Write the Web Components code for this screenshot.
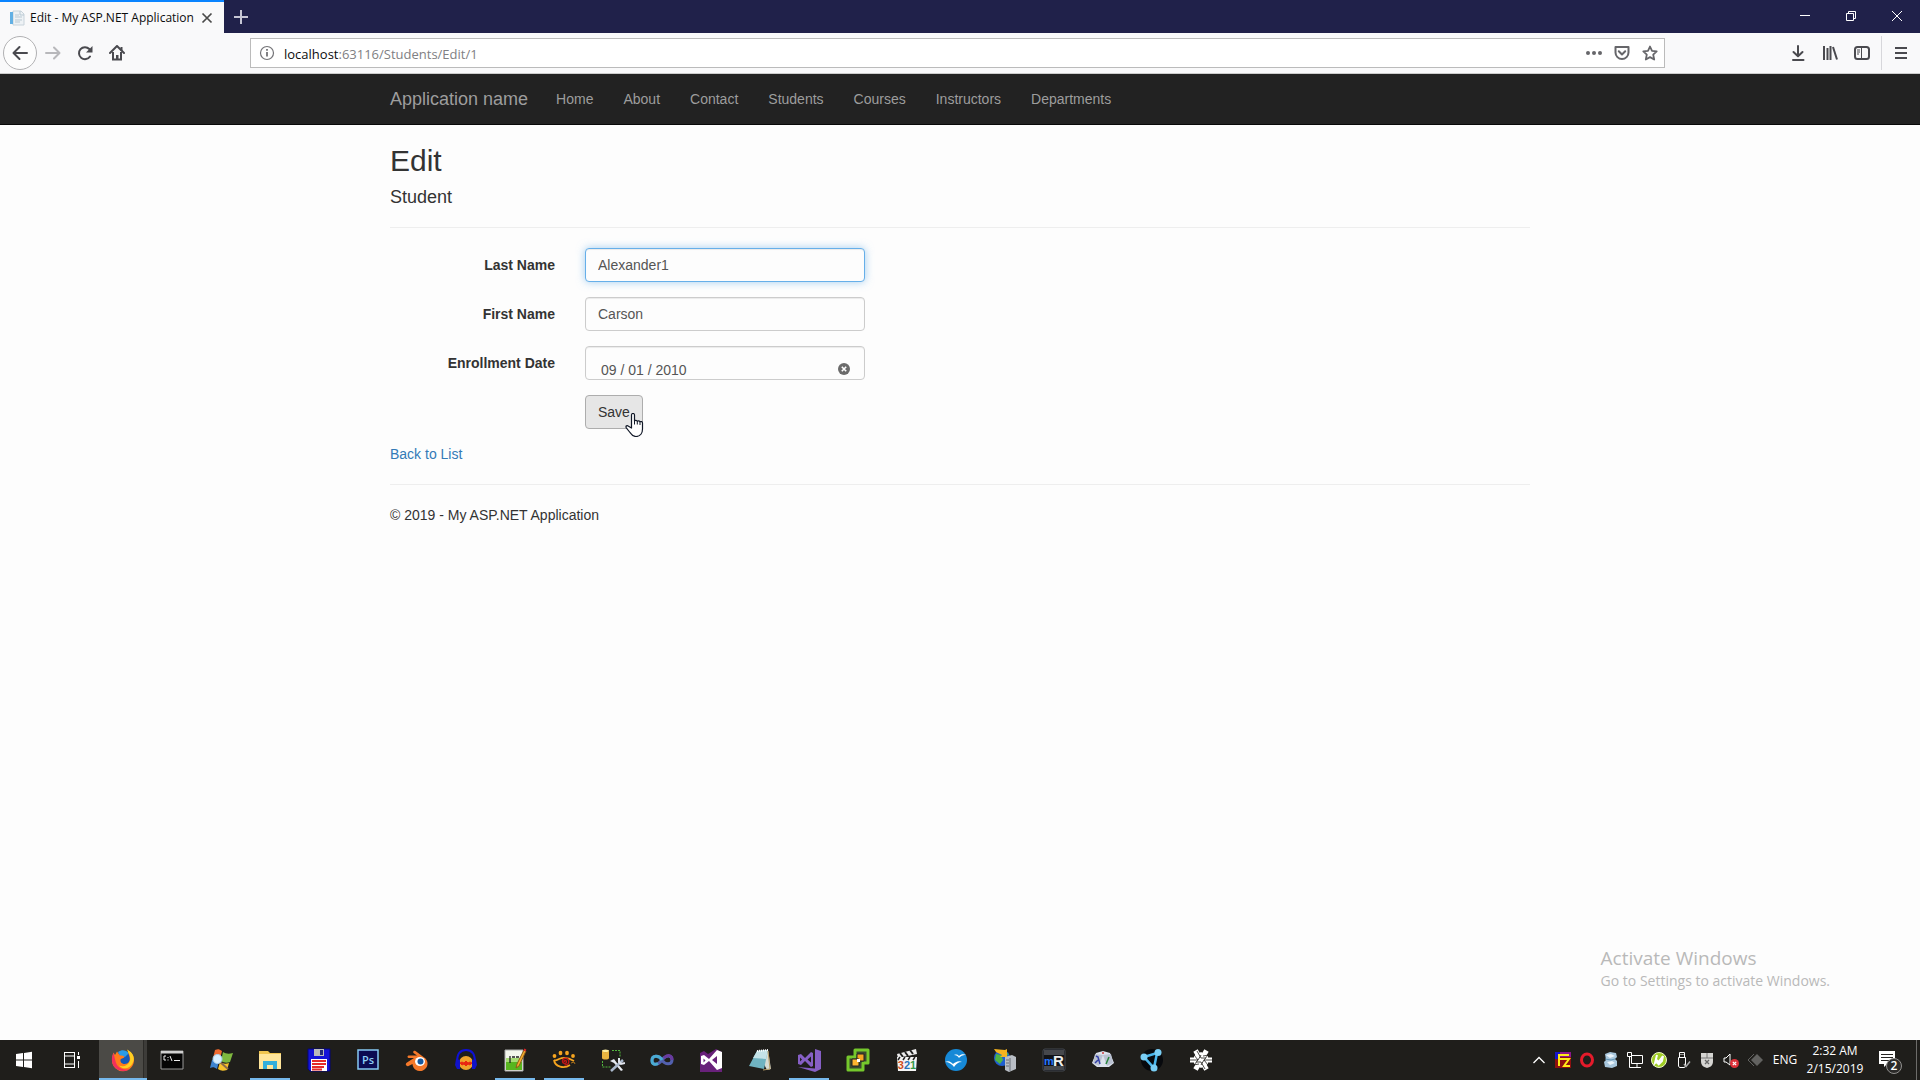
<!DOCTYPE html>
<html lang="en">
<head>
<meta charset="utf-8">
<title>Edit - My ASP.NET Application</title>
<style>
  html, body {
    height: 100%;
  }

  body {
    margin: 0;
    display: flex;
    flex-direction: column;
    position: relative;
    overflow: hidden;
    background: #fdfdfd;
    color: #333;
    font-family: "Liberation Sans", Arial, sans-serif;
    font-size: 14px;
    line-height: 20px;
    --ui-font: "Open Sans", "Noto Sans", sans-serif;
  }

  main-page {
    flex: 1;
  }
</style>
</head>
<body>
  <title-bar>Edit - My ASP.NET Application</title-bar>
  <tool-bar host="localhost" path=":63116/Students/Edit/1"></tool-bar>
  <nav-bar>
    <span slot="brand">Application name</span>
    <nav-link>Home</nav-link>
    <nav-link>About</nav-link>
    <nav-link>Contact</nav-link>
    <nav-link>Students</nav-link>
    <nav-link>Courses</nav-link>
    <nav-link>Instructors</nav-link>
    <nav-link>Departments</nav-link>
  </nav-bar>
  <main-page>
    <edit-form heading="Edit" entity="Student">
      <form-field label="Last Name" value="Alexander1" active></form-field>
      <form-field label="First Name" value="Carson"></form-field>
      <form-field label="Enrollment Date" value="09 / 01 / 2010" clearable></form-field>
      <save-button>Save</save-button>
    </edit-form>
    <span slot="footer">© 2019 - My ASP.NET Application</span>
  </main-page>
  <activate-notice></activate-notice>
  <task-bar></task-bar>

<script>
// icon drawings, [viewBox size, markup]
const icons = {
  favicon: [16, `<path d="M4 1h8l3 3v11H4z" fill="#eef2f5" stroke="#c8d3da"/><path d="M1 2h3v12H1z" fill="#62b0e4"/><path d="M6 5h4M6 7h7M6 10h7M6 12h5" stroke="#b9c9d3"/><path d="M11 1v4h4" fill="none" stroke="#b9c9d3"/>`],
  tabclose: [16, `<path d="M3.500 3.500l9 9M12.500 3.500l-9 9" stroke="#4a4a4a" stroke-width="1.700"/>`],
  plus: [16, `<path d="M8 1v14M1 8h14" stroke="#c6c6d4" stroke-width="2"/>`],
  minimise: [16, `<path d="M3 7.500h10" stroke="#fff"/>`],
  restore: [16, `<path d="M3.500 5.500h7v7h-7zM5.500 5V3.500h7v7H11" fill="none" stroke="#fff"/>`],
  close: [16, `<path d="M3 3l10 10M13 3L3 13" stroke="#fff"/>`],
  back: [16, `<path d="M15 8H2M7.500 2L1.500 8l6 6" fill="none" stroke="#4a4a4f" stroke-width="2" stroke-linecap="round" stroke-linejoin="round"/>`],
  forward: [16, `<path d="M1 8h13M9 2.500L14.500 8 9 13.500" fill="none" stroke="#b8b8bb" stroke-width="2" stroke-linecap="round" stroke-linejoin="round"/>`],
  reload: [16, `<path d="M13 11.500A6 6 0 1 1 12.300 4" fill="none" stroke="#4a4a4f" stroke-width="2" stroke-linecap="round"/><path d="M15.500 1v6.500H9z" fill="#4a4a4f"/>`],
  home: [16, `<path d="M1 8l7-7 7 7" fill="none" stroke="#4a4a4f" stroke-width="2" stroke-linecap="round" stroke-linejoin="round"/><path d="M11.500 2h2v4h-2z" fill="#4a4a4f"/><path d="M4 7v7.500h8V7" fill="none" stroke="#4a4a4f" stroke-width="2"/><path d="M7 10h2.500v5H7z" fill="#4a4a4f"/>`],
  info: [16, `<circle cx="8" cy="8" r="6.500" fill="none" stroke="#737377" stroke-width="1.200"/><path d="M8 7v4.500M8 4v1.800" stroke="#737377" stroke-width="1.800"/>`],
  dots: [16, `<g fill="#66666a"><circle cx="2" cy="8" r="2"/><circle cx="8" cy="8" r="2"/><circle cx="14" cy="8" r="2"/></g>`],
  pocket: [16, `<path d="M1.500 2h13v5.500a6.500 6.500 0 0 1-13 0z" fill="none" stroke="#66666a" stroke-width="2" stroke-linejoin="round"/><path d="M4.800 6.300L8 9.500l3.200-3.200" fill="none" stroke="#66666a" stroke-width="2" stroke-linecap="round" stroke-linejoin="round"/>`],
  star: [16, `<path d="M8 1.500l2 4.400 4.700.5-3.500 3.200 1 4.900L8 12.100l-4.200 2.400 1-4.900L1.300 6.400 6 5.900z" fill="none" stroke="#66666a" stroke-width="1.800" stroke-linejoin="round"/>`],
  download: [16, `<path d="M8 1v10M3.500 7L8 11.300 12.500 7M3 15h10.500" fill="none" stroke="#4a4a4f" stroke-width="2" stroke-linecap="round" stroke-linejoin="round"/>`],
  library: [16, `<path d="M2 1v14M5.500 3v12M8.500 1v14M11 2l4 12.500" stroke="#4a4a4f" stroke-width="2"/>`],
  sidebar: [16, `<rect x="1" y="2" width="14" height="12" rx="2.500" fill="none" stroke="#4a4a4f" stroke-width="2"/><path d="M7.500 3v10M3 5h3M3 7h3M3 9h2" stroke="#4a4a4f"/>`],
  menu: [16, `<path d="M2 3h12M2 8h12M2 13h12" stroke="#4a4a4f" stroke-width="2"/>`],
  clear: [12, `<circle cx="6" cy="6" r="6" fill="#6b6b6b"/><path d="M3.800 3.800l4.400 4.400M8.200 3.800L3.800 8.200" stroke="#fff" stroke-width="1.600"/>`],
  hand: [24, `<path d="M8.500 15V2a1.500 1.500 0 0 1 3 0v6c.3-.9 2.500-.9 2.800.3.700-.8 2.400-.6 2.700.5.900-.6 2.500-.2 2.500 1.200v6c0 4-2 7.500-6.500 7.500-3.500 0-4.500-1.700-6-4L3.300 14.800c-1-1.800.8-2.800 2.200-1.600z" fill="#fff" stroke="#111827" stroke-width="1.200" stroke-linejoin="round"/><path d="M11.500 8v3.500M14.300 8.500v3M17 9v3" stroke="#111827"/>`],

  // task bar
  windows: [24, `<path d="M4 6l7-1v6.500H4zM12 4.900l8-1.100v7.700h-8zM4 12.500h7V19l-7-1zM12 12.500h8v7.700l-8-1.100z" fill="#fff"/>`],
  taskview: [24, `<path d="M4 4.500h11M4 19.500h11M4.500 4v4h10V4M4.500 20v-4h10v4M4.500 8v8M14.500 8v8M18.500 4v3M18.500 13v7" fill="none" stroke="#fff"/><path d="M17 8h3v3h-3z" fill="#fff"/>`],
  firefox: [24, `<circle cx="12" cy="12" r="9" fill="#1458b8"/><path d="M7 4c4-3 8-2 11 1l-4 4-5-1z" fill="#2a9be8"/><path d="M2.500 4.500L4 7l2-3.500 3 4c2 0 4 0 4.500 1.500-.5 1.500-3 1-4 2.500-.5 3 2 4.500 4 4.500 4 0 6-3 5-7-.5-2-1.500-4-1.500-6.500 4 2 6 5.500 6 9.500a11 11 0 0 1-22 .500c0-3 .5-5.500 1.500-8z" fill="#ff7b1c"/><path d="M16 1.500c1 3 4 6 3 11-1.500 5-7 7-11 5 4 4.500 11 3.500 13.500-2C25 9 21 4 16 1.500z" fill="#ffcf22"/><path d="M2.500 5C.5 9 0 14 3 18.500c4 5 11 6 16 2.500-5 1.500-10 0-13-4C4 13.500 4 10 2.500 5z" fill="#f3305c"/>`],
  cmd: [24, `<path d="M1 3h22v18H1z" fill="#050505" stroke="#999"/><path d="M1 3h22v2.500H1z" fill="#d0d0d0"/><path d="M6 8H4v4h2M8 9v1M8 11.500v1M10 8l2 5M14 12.500h6" fill="none" stroke="#eee"/>`],
  search: [24, `<path d="M6 2c3-1 4-1 7 1l-2 8c-3-2-4-2-7-1z" fill="#ef6a30"/><path d="M14 4c3 2 6 2 10 1l-3 9c-3 1-6 1-9-1z" fill="#7fb93f"/><path d="M3 12c3-1 5-1 7 1l-2 8c-3-2-4-2-7-1z" fill="#3d84cf"/><path d="M11 14c3 2 6 2 9 1l-2 7c-4 1-6 1-9-1z" fill="#f8c32c"/><path d="M11 14l8 7" stroke="#8b6b4c" stroke-width="2"/><circle cx="8.500" cy="11" r="4.500" fill="#d8efff" stroke="#a9d3ee"/>`],
  explorer: [24, `<path d="M1 3h9l2 2h11v16H1z" fill="#f0c54f"/><path d="M1 6h22v15H1z" fill="#ffe59a"/><path d="M5 13h14v8h-4v-4H9v4H5z" fill="#32aedb"/>`],
  floppy: [24, `<path d="M1 1h22v22H3l-2-2z" fill="#1414d8" stroke="#05057a"/><path d="M7 1h10v7H7z" fill="#bbb"/><path d="M13 2h3v5h-3z" fill="#222a7a"/><path d="M4 11h16v12H4z" fill="#fff"/><path d="M5 13h14M5 16h14M5 19h12M5 21.500h10" stroke="#e42a2a" stroke-width="1.800"/>`],
  photoshop: [24, `<path d="M2 2h20v19H2z" fill="#0b0b52" stroke="#86c9f4" stroke-width="1.500"/><text x="12" y="16" text-anchor="middle" font-family="Open Sans, sans-serif" font-size="11" font-weight="600" fill="#8ed0f8">Ps</text>`],
  blender: [24, `<path d="M1 17c-.5-1 0-2 1-2.500L9 10H4c-2 0-2-2.500 0-2.500h8L8.500 5c-1-1.500.5-3 2-2l10 7.500a7.500 7.500 0 1 1-13 5.500l-4 2c-1 .5-2 0-2.500-1z" fill="#f5792a"/><ellipse cx="15" cy="13.500" rx="5" ry="4.500" fill="#fff"/><circle cx="15.500" cy="13.500" r="3" fill="#16589e"/>`],
  audacity: [24, `<circle cx="12" cy="15" r="7" fill="#efa42c"/><path d="M6 15l2-1 2 1 2-2 2 2 2-1 2 1-2 2-2-1-2 2-2-2-2 1z" fill="#e92712" stroke="#e92712"/><path d="M3 14C3 5 7 2 12 2s9 3 9 12" fill="none" stroke="#0e10d6" stroke-width="2"/><path d="M2 11l4 1v9H3l-2-4zM22 11l-4 1v9h3l2-4z" fill="#1113c8"/>`],
  notepadpp: [24, `<path d="M2 2h18v21H2z" fill="#f3f6ed" stroke="#aaa"/><path d="M3 13h16v9H3z" fill="#58b51f"/><path d="M3 10h16v4H3z" fill="#a7dc75"/><path d="M7 8v7M9 9h3M13 9h3" stroke="#222" stroke-width="1.300"/><path d="M21 2l2 1-7 15-3 2 1-4z" fill="#f5ac2b" stroke="#8a5c1b"/><path d="M20.500 2.500l2 1 .8-2-2-1z" fill="#d92525"/>`],
  paw: [24, `<path d="M2 12c2 1 3 0 5-1 5-2 10-1 15 2M2 12c1 7 10 9 16 5" fill="none" stroke="#f5a41f" stroke-width="1.800"/><g fill="#f5a41f"><circle cx="2.500" cy="8" r="1.900"/><ellipse cx="8.500" cy="5" rx="1.900" ry="2.300"/><ellipse cx="15" cy="5" rx="1.900" ry="2.300"/><circle cx="21" cy="8" r="1.900"/></g><path d="M12.500 14c-1-2 2-2 2 0s-4 2-4-1 5-4 6-1 0 5-4 5" fill="none" stroke="#c01515" stroke-width="1.400"/><path d="M19 15l3-1 1 2" fill="none" stroke="#a8701a"/>`],
  sqltools: [24, `<ellipse cx="4.500" cy="3" rx="3.500" ry="1.500" fill="#fff0a0"/><path d="M1 3v7c0 2 7 2 7 0V3c-1 1.500-6 1.500-7 0z" fill="#e8b440"/><path d="M11 2.500h8v7M1.500 13v6h8" fill="none" stroke="#52b53e" stroke-dasharray="2 1"/><path d="M9 13l4-2 3 4 6 7-2 1-7-8z" fill="#e5e9f0"/><path d="M22 12l-12 11" stroke="#aab8cc" stroke-width="2.500"/><path d="M18 10v4l2 2 4-1" fill="none" stroke="#e1e5ee" stroke-width="2"/>`],
  infinity: [24, `<path d="M12 12C9 7 2 7 2 12.500c0 5 6 5 10-.5s10-5 10 0-7 5-10 0" fill="none" stroke="#5260ae" stroke-width="3"/><path d="M12 12C9 7 2 7 2 12.500c0 4 3 4.500 6 3" fill="none" stroke="#4aabd2" stroke-width="3"/><path d="M14 10c4-4 8-3 8 2" fill="none" stroke="#693a9e" stroke-width="3"/>`],
  vs2012: [24, `<path d="M1 5l4-2 4 3 8-5 6 3v20H1z" fill="#68217a"/><path d="M2 8l3-1 5 4 8-9 5 2v16l-5 2-8-9-5 4-3-1zM4.500 10.500v4l2-2zM18 8l-5 4 5 4z" fill="#fff" fill-rule="evenodd"/>`],
  notepad: [24, `<path d="M9 3l11-1 3 19-4 1z" fill="#d7dcd5"/><path d="M9 3l11-1-4 19-15-3z" fill="#6fb3c1"/><path d="M9 3l11-1-2 9-13-1z" fill="#c4e3e8"/><path d="M9 3l11-1" stroke="#fff" stroke-width="2" stroke-dasharray="1 1"/><path d="M20 3l2 18-7 1" fill="none" stroke="#b69c66"/>`],
  vs2017: [24, `<path d="M18 1l6 2v18l-6 3L1 19l17 1.500z" fill="#865fc5"/><path d="M1 7l3-1 4 4 6-6 2 1v13l-2 1-6-6-4 4-3-1zM3 9.500v4l2-2zM14 8.500l-3.500 3L14 14.500z" fill="#865fc5" fill-rule="evenodd"/>`],
  vmware: [24, `<path d="M9 2h13v13h-5v7H2V9h7z" fill="#3b482f" stroke="#75c82c" stroke-width="3" stroke-linejoin="round"/><path d="M11 6h7v7h-7z" fill="#f6a622" stroke="#222"/><path d="M6 11h7v7H6z" fill="#ffb52f" stroke="#222"/><path d="M11 11h3v3h-3z" fill="#fff"/>`],
  player: [24, `<path d="M2 6l19-5 1 5-19 4z" fill="#eee"/><path d="M5 5l3 4M10 4l3 4M15 2l3 4" stroke="#222" stroke-width="2"/><path d="M2 9h20l-1 14H3z" fill="#f5f5f5"/><path d="M5 9l-2 3M10 9l-2 3M15 9l-2 3M20 9l-2 3" stroke="#222" stroke-width="1.500"/><text x="12" y="21" text-anchor="middle" font-family="Liberation Sans, sans-serif" font-size="11" font-weight="700"><tspan fill="#cf4b20">3</tspan><tspan fill="#2773bc">2</tspan><tspan fill="#35994a">1</tspan></text>`],
  openoffice: [24, `<circle cx="12" cy="12" r="11" fill="#1689d7"/><path d="M1 14c4-2 6 0 8 2 2-2 6-4 9-2-4 0-6 2-8 5-2-3-5-5-9-5zM10 7c3-1 4 0 5 1 2-2 5-2 7-1-4 0-5 1-7 3-1-2-3-3-5-3z" fill="#fff"/>`],
  iis: [24, `<circle cx="9" cy="10" r="8" fill="#1f5fd0"/><path d="M3 6l5 1 2 5-3 4-5-4zM11 3l5 3-4 3z" fill="#4fb545"/><path d="M1 1l11 1 2-1v8l-7 0 2-2-6-3z" fill="#f6b41e"/><path d="M12 9l7-2 4 2v12l-7 3-4-2z" fill="#b9bec5"/><path d="M17 10v13M13 12h3M13 15h3M13 18h3" stroke="#686e78"/>`],
  mr: [24, `<rect x="1" y="1" width="22" height="22" rx="2" fill="#111317" stroke="#454950"/><path d="M2 2h20v5H2zM2 18h20v4H2z" fill="#46484c"/><text x="2" y="17" font-family="Liberation Sans, sans-serif" font-size="11" font-weight="700" fill="#2476ff">m</text><text x="11" y="18" font-family="Liberation Sans, sans-serif" font-size="15" font-weight="700" fill="#eee">R</text>`],
  dice: [24, `<path d="M5 5l7-2 7 2 4 10-5 4H6l-5-4z" fill="#dce2ed"/><path d="M4 6l8 1-4 11-6-3zM12 7l8-1 2 9-6 3z" fill="#b9c1d1"/><path d="M5 8l2 1 2 7M7 12l-3 3" fill="none" stroke="#3340a7" stroke-width="1.500"/><path d="M18 9l-3 7" stroke="#26843b" stroke-width="1.500"/><circle cx="12" cy="5" r="1" fill="#ce3d3d"/>`],
  nodes: [24, `<circle cx="12" cy="12" r="11" fill="#07090d"/><path d="M4 9l13-4-3 15z" fill="none" stroke="#4ab7ed" stroke-width="2.500"/><g fill="#79cef5"><circle cx="4" cy="9" r="3.500"/><circle cx="18" cy="4.500" r="3.500"/><circle cx="14" cy="20" r="3.500"/></g>`],
  knot: [24, `<g fill="none" stroke="#fff" stroke-width="5"><path d="M1 12h22M6.500 2.500l11 19M17.500 2.500l-11 19"/></g><path d="M12 4l7 4v8l-7 4-7-4V8z" fill="#fff"/><path d="M1 12h8l3-5M8 3l4 7h5M20 7l-6 1M23 12h-8l-3 5M16 21l-4-7H7M4 17l6-1M5 7l4 5-4 5M19 7l-4 5 4 5" fill="none" stroke="#1f1e1b" stroke-width=".8"/>`],

  // system tray
  chevron: [16, `<path d="M2.500 11L8 5.500l5.500 5.500" fill="none" stroke="#fff" stroke-width="1.300"/>`],
  filezilla: [16, `<path d="M0 0h16v16H0z" fill="#8d1010"/><path d="M0 0h5v7H0z" fill="#1515c8"/><path d="M5 0h11v5H5z" fill="#8b178b"/><path d="M4 14V3h10M4 7h10l-5 7h6" fill="none" stroke="#ffeb17" stroke-width="2"/>`],
  opera: [16, `<ellipse cx="8" cy="8" rx="5.500" ry="6" fill="none" stroke="#e51b2b" stroke-width="3"/>`],
  database: [16, `<path d="M2 2l5-2 6 1 1 4-2 2 2 2v5l-5 2-7-1-1-5 2-2z" fill="#a8c7dd"/><path d="M3 3l5-1 4 2-5 2zM4 10l5-1 3 2-5 2z" fill="#e9f3fa"/><path d="M2 7l6 1 4-1" fill="none" stroke="#5f93b4"/>`],
  network: [16, `<path d="M4.500 3.500h11v8h-11zM10 12v3M6 15.500h8M.500.500h4v4h-4zM2.500 5v10.500H7" fill="none" stroke="#fff"/>`],
  green: [16, `<circle cx="8" cy="8" r="7.500" fill="#9fcd24" stroke="#eef8c5"/><path d="M6 3l-2 8 3-3M6 12l6-8-1 5-4 4" fill="none" stroke="#fff" stroke-width="2"/>`],
  usb: [16, `<path d="M3.500 5.500h7V14l-1 1.500h-5l-1-1.500zM4.500 5V.500h5V5M6 2v1M8 2v1" fill="none" stroke="#fff"/><path d="M9 12l2 2.500 4-5" fill="none" stroke="#aaa" stroke-width="1.500"/>`],
  mouse: [16, `<path d="M2 1h12v8c0 4-2 6-6 7-4-1-6-3-6-7z" fill="#d5d5d2"/><path d="M2 6h12M8 1v5" stroke="#777"/><path d="M6 8l4 4M10 8l-4 4" stroke="#666" stroke-width="1.300"/>`],
  volume: [16, `<path d="M1 6h2l4-4v11L3 10H1z" fill="none" stroke="#fff"/><circle cx="11.500" cy="11.500" r="4.500" fill="#dc3038"/><path d="M9.800 9.800l3.400 3.400M13.200 9.800l-3.400 3.400" stroke="#fff" stroke-width="1.200"/>`],
  diamond: [16, `<path d="M10 2l6 6-6 6-6-6z" fill="#626260"/><path d="M7 2L1 8l6 6" fill="none" stroke="#626260"/>`],
  message: [28, `<path d="M4 5h16v13h-8l-3 3v-3H4z" fill="#fff"/><path d="M6 8.500h12M6 11.500h12M6 14.500h8" stroke="#252422"/><circle cx="19" cy="20" r="7.500" fill="#2b2a29" stroke="#92918f"/><text x="19" y="24" text-anchor="middle" font-family="Open Sans, sans-serif" font-size="12" font-weight="600" fill="#fff">2</text>`]
};

class SvgIcon extends HTMLElement {
  constructor() {
    super();
    this.attachShadow({ mode: "open" });
  }
  connectedCallback() {
    const [size, shapes] = icons[this.getAttribute("name")];
    this.shadowRoot.innerHTML = `
      <style>
        :host { display: inline-flex; flex: none; }
        svg { display: block; }
      </style>
      <svg width="${size}" height="${size}" viewBox="0 0 ${size} ${size}" aria-hidden="true">${shapes}</svg>
    `;
  }
}
customElements.define("svg-icon", SvgIcon);

class TitleBar extends HTMLElement {
  constructor() {
    super();
    this.attachShadow({ mode: "open" });
    this.shadowRoot.innerHTML = `
      <style>
        :host {
          display: flex;
          height: 33px;
          background: #20214a;
          font: 12px/16px var(--ui-font);
          color: #0c0c0d;
        }
        button {
          display: flex;
          align-items: center;
          justify-content: center;
          padding: 0;
          border: 0;
          background: none;
        }
        .tab {
          display: flex;
          align-items: center;
          box-sizing: border-box;
          width: 224px;
          padding: 0 9px;
          border-top: 2px solid #0a84ff;
          background: #f9f9fa;
        }
        .name {
          flex: 1;
          padding-left: 5px;
          white-space: nowrap;
        }
        .new { width: 34px; }
        .window {
          display: flex;
          height: 31px;
          margin-left: auto;
        }
        .window button { width: 46px; }
      </style>
      <div class="tab">
        <svg-icon name="favicon"></svg-icon>
        <span class="name"><slot></slot></span>
        <button aria-label="Close tab"><svg-icon name="tabclose"></svg-icon></button>
      </div>
      <button class="new" aria-label="New tab"><svg-icon name="plus"></svg-icon></button>
      <div class="window">
        <button aria-label="Minimize"><svg-icon name="minimise"></svg-icon></button>
        <button aria-label="Restore"><svg-icon name="restore"></svg-icon></button>
        <button aria-label="Close"><svg-icon name="close"></svg-icon></button>
      </div>
    `;
  }
}
customElements.define("title-bar", TitleBar);

class ToolBar extends HTMLElement {
  constructor() {
    super();
    this.attachShadow({ mode: "open" });
  }
  connectedCallback() {
    this.shadowRoot.innerHTML = `
      <style>
        :host {
          display: flex;
          align-items: center;
          box-sizing: border-box;
          height: 41px;
          padding: 0 1px 0 3px;
          border-bottom: 1px solid #ccc;
          background: #f9f9fa;
          font: 13px/20px var(--ui-font);
        }
        button {
          display: flex;
          align-items: center;
          justify-content: center;
          width: 32px;
          height: 32px;
          padding: 0;
          border: 0;
          background: none;
        }
        .back {
          width: 34px;
          height: 34px;
          border: 1px solid #b1b1b3;
          border-radius: 50%;
          background: #fdfdfd;
        }
        .url {
          display: flex;
          align-items: center;
          flex: 1;
          box-sizing: border-box;
          height: 30px;
          margin: 0 117px;
          padding: 0 0 0 8px;
          border: 1px solid #bbb;
          background: #fff;
        }
        .address {
          flex: 1;
          padding: 2px 0 0 9px;
          color: #0c0c0d;
        }
        .address span { color: #808083; }
        .url button { width: 28px; }
        .menu {
          width: 38px;
          height: 34px;
          border-left: 1px solid #d7d7db;
          margin-left: 3px;
        }
      </style>
      <button class="back" aria-label="Back"><svg-icon name="back"></svg-icon></button>
      <button aria-label="Forward"><svg-icon name="forward"></svg-icon></button>
      <button aria-label="Reload"><svg-icon name="reload"></svg-icon></button>
      <button aria-label="Home"><svg-icon name="home"></svg-icon></button>
      <div class="url">
        <svg-icon name="info"></svg-icon>
        <div class="address">${this.getAttribute("host")}<span>${this.getAttribute("path")}</span></div>
        <button aria-label="Page actions"><svg-icon name="dots"></svg-icon></button>
        <button aria-label="Save to Pocket"><svg-icon name="pocket"></svg-icon></button>
        <button aria-label="Bookmark this page"><svg-icon name="star"></svg-icon></button>
      </div>
      <button aria-label="Downloads"><svg-icon name="download"></svg-icon></button>
      <button aria-label="Library"><svg-icon name="library"></svg-icon></button>
      <button aria-label="Sidebars"><svg-icon name="sidebar"></svg-icon></button>
      <button class="menu" aria-label="Menu"><svg-icon name="menu"></svg-icon></button>
    `;
  }
}
customElements.define("tool-bar", ToolBar);

class NavBar extends HTMLElement {
  constructor() {
    super();
    this.attachShadow({ mode: "open" });
    this.shadowRoot.innerHTML = `
      <style>
        :host {
          display: block;
          border-bottom: 1px solid #080808;
          background: #222;
        }
        nav {
          display: flex;
          align-items: center;
          box-sizing: border-box;
          max-width: 1170px;
          height: 50px;
          margin: 0 auto;
        }
        .brand {
          padding: 15px 13px 15px 15px;
          color: #9d9d9d;
          font-size: 18px;
          text-decoration: none;
        }
      </style>
      <nav>
        <a class="brand" href="#"><slot name="brand"></slot></a>
        <slot></slot>
      </nav>
    `;
  }
}
customElements.define("nav-bar", NavBar);

class NavLink extends HTMLElement {
  constructor() {
    super();
    this.attachShadow({ mode: "open" });
    this.shadowRoot.innerHTML = `
      <style>
        :host { display: block; }
        a {
          display: block;
          padding: 15px;
          color: #9d9d9d;
          text-decoration: none;
        }
      </style>
      <a href="#"><slot></slot></a>
    `;
  }
}
customElements.define("nav-link", NavLink);

class MainPage extends HTMLElement {
  constructor() {
    super();
    this.attachShadow({ mode: "open" });
    this.shadowRoot.innerHTML = `
      <style>
        :host { display: block; }
        .container {
          box-sizing: border-box;
          max-width: 1170px;
          margin: 0 auto;
          padding: 0 15px;
        }
        hr {
          margin: 20px 0;
          border: 0;
          border-top: 1px solid #eee;
        }
        a {
          color: #337ab7;
          text-decoration: none;
        }
        p { margin: 0 0 10px; }
      </style>
      <div class="container">
        <slot></slot>
        <div><a href="#">Back to List</a></div>
        <hr>
        <footer><p><slot name="footer"></slot></p></footer>
      </div>
    `;
  }
}
customElements.define("main-page", MainPage);

class EditForm extends HTMLElement {
  constructor() {
    super();
    this.attachShadow({ mode: "open" });
  }
  connectedCallback() {
    this.shadowRoot.innerHTML = `
      <style>
        :host { display: block; }
        h2, h4 {
          margin: 0 0 10px;
          font-weight: 400;
        }
        h2 {
          padding-top: 19px;
          font-size: 30px;
          line-height: 33px;
        }
        h4 {
          font-size: 18px;
          line-height: 20px;
        }
        hr {
          margin: 20px 0;
          border: 0;
          border-top: 1px solid #eee;
        }
        form {
          display: flex;
          flex-direction: column;
          gap: 15px;
          margin-bottom: 15px;
        }
      </style>
      <h2>${this.getAttribute("heading")}</h2>
      <h4>${this.getAttribute("entity")}</h4>
      <hr>
      <form><slot></slot></form>
    `;
  }
}
customElements.define("edit-form", EditForm);

class FormField extends HTMLElement {
  constructor() {
    super();
    this.attachShadow({ mode: "open" });
  }
  connectedCallback() {
    const clear = this.hasAttribute("clearable")
      ? `<button type="button" aria-label="Clear"><svg-icon name="clear"></svg-icon></button>`
      : "";
    this.shadowRoot.innerHTML = `
      <style>
        :host {
          display: flex;
          gap: 30px;
        }
        label {
          width: 165px;
          padding-top: 7px;
          font-weight: 700;
          text-align: right;
        }
        .control {
          display: flex;
          box-sizing: border-box;
          width: 280px;
          height: 34px;
          border: 1px solid #ccc;
          border-radius: 4px;
          background: #fdfdfd;
          box-shadow: inset 0 1px 1px rgba(0, 0, 0, 0.075);
        }
        :host([active]) .control {
          border-color: #66afe9;
          box-shadow: inset 0 1px 1px rgba(0, 0, 0, 0.075), 0 0 8px rgba(102, 175, 233, 0.6);
        }
        input {
          flex: 1;
          min-width: 0;
          padding: 0 12px;
          border: 0;
          outline: 0;
          background: none;
          color: #555;
          font: inherit;
        }
        :host([clearable]) input { padding: 14px 0 0 15px; }
        button {
          display: flex;
          padding: 16px 14px 0;
          border: 0;
          background: none;
        }
      </style>
      <label for="field">${this.getAttribute("label")}</label>
      <div class="control">
        <input id="field" type="text" value="${this.getAttribute("value")}">
        ${clear}
      </div>
    `;
  }
}
customElements.define("form-field", FormField);

class SaveButton extends HTMLElement {
  constructor() {
    super();
    this.attachShadow({ mode: "open" });
    this.shadowRoot.innerHTML = `
      <style>
        :host {
          display: flex;
          padding-left: 195px;
        }
        .wrap { position: relative; }
        button {
          height: 34px;
          padding: 0 12px;
          border: 1px solid #adadad;
          border-radius: 4px;
          background: #e6e6e6;
          color: #333;
          font: inherit;
        }
        /* mouse pointer over the button */
        .pointer {
          position: absolute;
          left: 38px;
          top: 18px;
        }
      </style>
      <div class="wrap">
        <button type="submit"><slot></slot></button>
        <svg-icon class="pointer" name="hand"></svg-icon>
      </div>
    `;
  }
}
customElements.define("save-button", SaveButton);

class ActivateNotice extends HTMLElement {
  constructor() {
    super();
    this.attachShadow({ mode: "open" });
    this.shadowRoot.innerHTML = `
      <style>
        :host {
          position: absolute;
          right: 90px;
          bottom: 89px;
          color: #b9b9b9;
          font: 14px/20px var(--ui-font);
        }
        .title {
          font-size: 19px;
          line-height: 26px;
        }
      </style>
      <div class="title">Activate Windows</div>
      <div>Go to Settings to activate Windows.</div>
    `;
  }
}
customElements.define("activate-notice", ActivateNotice);

class TaskButton extends HTMLElement {
  constructor() {
    super();
    this.attachShadow({ mode: "open" });
  }
  connectedCallback() {
    const icon = this.getAttribute("icon");
    this.shadowRoot.innerHTML = `
      <style>
        :host {
          display: flex;
          box-sizing: border-box;
          width: 49px;
          padding-left: 5px;
        }
        button {
          display: flex;
          align-items: center;
          justify-content: center;
          width: 40px;
          height: 40px;
          padding: 0;
          border: 0;
          background: none;
        }
        :host([running]) button {
          box-shadow: inset 0 -2px #76b9ed;
        }
        :host([current]) {
          padding-left: 1px;
        }
        :host([current]) button {
          width: 48px;
          background: linear-gradient(to right, #4b4a46 44px, #2c2b28 44px, #2c2b28 45px, #3d3c39 45px);
        }
      </style>
      <button aria-label="${icon}"><svg-icon name="${icon}"></svg-icon></button>
    `;
  }
}
customElements.define("task-button", TaskButton);

class TaskBar extends HTMLElement {
  constructor() {
    super();
    this.attachShadow({ mode: "open" });
    const apps = ["cmd", "search", "explorer", "floppy", "photoshop", "blender", "audacity",
      "notepadpp", "paw", "sqltools", "infinity", "vs2012", "notepad", "vs2017", "vmware",
      "player", "openoffice", "iis", "mr", "dice", "nodes", "knot"];
    const running = ["explorer", "notepadpp", "paw", "vs2017"];
    const tray = ["chevron", "filezilla", "opera", "database", "network", "green", "usb",
      "mouse", "volume", "diamond"];
    this.shadowRoot.innerHTML = `
      <style>
        :host {
          display: flex;
          height: 40px;
          background: #1f1e1b;
          color: #fff;
          font: 12px/18px var(--ui-font);
        }
        .system, .apps, .tray {
          display: flex;
        }
        .system { margin-right: 2px; }
        .system button, .tray button {
          display: flex;
          align-items: center;
          justify-content: center;
          width: 24px;
          height: 40px;
          padding: 0;
          border: 0;
          background: none;
          color: inherit;
          font: inherit;
        }
        .system button { width: 48px; }
        .tray {
          align-items: center;
          margin-left: auto;
        }
        .tray .lang { width: 36px; }
        .tray .clock {
          flex-direction: column;
          width: 64px;
        }
        .tray .messages { width: 44px; }
        .desktop {
          width: 3px;
          height: 40px;
          margin-left: 5px;
          border-left: 1px solid #6d6c6a;
        }
      </style>
      <div class="system">
        <button aria-label="Start"><svg-icon name="windows"></svg-icon></button>
        <button aria-label="Task View"><svg-icon name="taskview"></svg-icon></button>
      </div>
      <div class="apps">
        <task-button icon="firefox" running current></task-button>
        ${apps.map(a => `<task-button icon="${a}"${running.includes(a) ? " running" : ""}></task-button>`).join("")}
      </div>
      <div class="tray">
        ${tray.map(t => `<button aria-label="${t}"><svg-icon name="${t}"></svg-icon></button>`).join("")}
        <button class="lang">ENG</button>
        <button class="clock"><span>2:32 AM</span><span>2/15/2019</span></button>
        <button class="messages" aria-label="Notifications"><svg-icon name="message"></svg-icon></button>
        <div class="desktop"></div>
      </div>
    `;
  }
}
customElements.define("task-bar", TaskBar);
</script>
</body>
</html>
